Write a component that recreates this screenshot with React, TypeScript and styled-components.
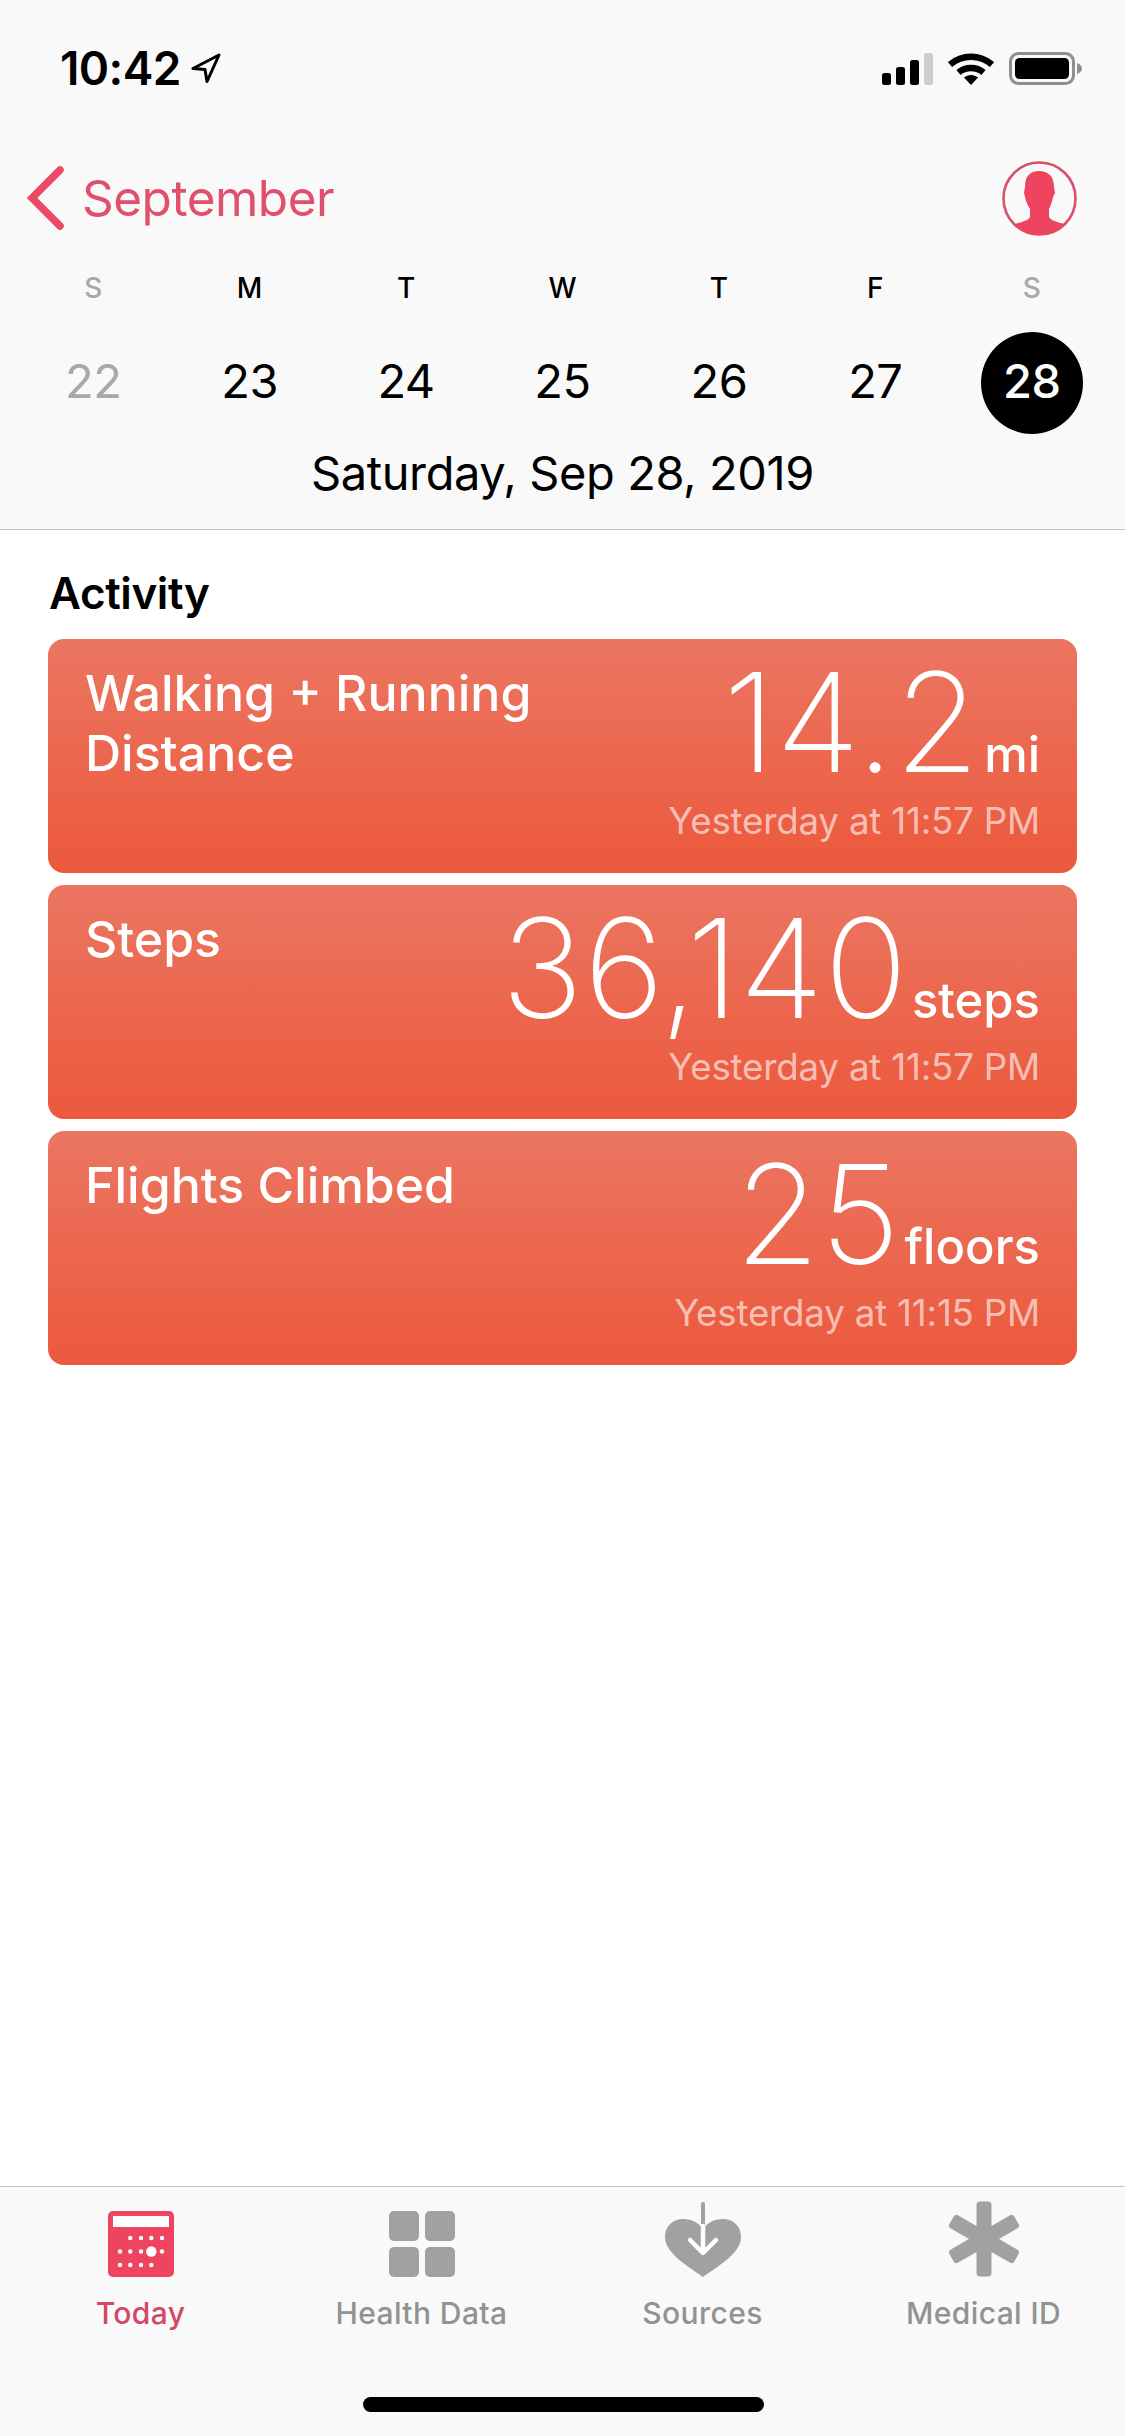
import React from "react";
import styled, { createGlobalStyle } from "styled-components";

const Global = createGlobalStyle`
  html, body { margin: 0; padding: 0; background: #fff; }
  body { font-family: Inter, "Liberation Sans", sans-serif; -webkit-font-smoothing: antialiased; }
`;

const Page = styled.div`
  width: 1125px; height: 2436px; display: flex; flex-direction: column; background: #fff; overflow: hidden;
`;
const Header = styled.header`
  background: #f9f9f9; border-bottom: 1px solid #c4c4c4; height: 530px; box-sizing: border-box;
`;
const StatusBar = styled.div`
  height: 136px; box-sizing: border-box; padding: 44px 43px 0 60px; display: flex; align-items: flex-start; justify-content: space-between;
`;
const TimeGroup = styled.div`display: flex; align-items: center; gap: 10px;`;
const Time = styled.span`font-size: 46px; line-height: 48px; font-weight: 600; letter-spacing: -0.6px; color: #000;`;
const StatusIcons = styled.div`display: flex; align-items: flex-end; gap: 15px; padding-top: 8px;`;
const NavRow = styled.div`
  height: 124px; box-sizing: border-box; padding: 0 48px 0 27px; display: flex; align-items: center; justify-content: space-between;
`;
const Back = styled.div`display: flex; align-items: center; gap: 18px;`;
const BackText = styled.span`font-size: 49.5px; color: #e0506c; letter-spacing: -0.5px;`;
const WeekRow = styled.div`
  padding: 0 15px; display: grid; grid-template-columns: repeat(7, 1fr); justify-items: center; align-items: center;
`;
const Weekday = styled.span<{ $muted?: boolean }>`
  height: 56px; line-height: 56px; font-size: 28px; font-weight: 500; color: ${p => (p.$muted ? "#a8a8a8" : "#000")};
`;
const DayNum = styled.span<{ $muted?: boolean; $active?: boolean }>`
  width: 102px; height: 102px; margin: 16px 0 12px; padding-bottom: 6px; box-sizing: border-box; border-radius: 50%; display: flex; align-items: center; justify-content: center;
  font-size: 47px; letter-spacing: -0.5px; font-weight: ${p => (p.$active ? 500 : 400)};
  background: ${p => (p.$active ? "#000" : "transparent")};
  color: ${p => (p.$active ? "#fff" : p.$muted ? "#a8a8a8" : "#000")};
`;
const FullDate = styled.div`
  height: 54px; line-height: 54px; text-align: center; font-size: 47px; letter-spacing: -0.4px; color: #000;
`;
const Main = styled.main`flex: 1; padding: 41px 48px 0;`;
const SectionTitle = styled.h2`
  margin: 0 0 24px 1px; font-size: 44px; line-height: 44px; font-weight: 600; letter-spacing: -0.4px; color: #000;
`;
const CardList = styled.div`display: flex; flex-direction: column; gap: 12px;`;
const Card = styled.section`
  height: 234px; box-sizing: border-box; border-radius: 16px; padding: 24px 37px 0; display: flex; justify-content: space-between;
  background: linear-gradient(180deg, #eb7662 0%, #ec5c40 88%, #ec5a3e 100%); color: #fff;
`;
const CardTitle = styled.div`font-size: 50px; line-height: 60px; font-weight: 500; white-space: pre-line;`;
const CardRight = styled.div`display: flex; flex-direction: column; align-items: flex-end;`;
const ValueRow = styled.div`display: flex; align-items: baseline; gap: 4px; height: 122px; margin-top: -2px;`;
const Value = styled.span`font-size: 138px; line-height: 122px; font-weight: 200; letter-spacing: 0.4px;`;
const Unit = styled.span`font-size: 49px; font-weight: 500;`;
const Stamp = styled.div`font-size: 36.7px; line-height: 44px; margin-top: 16px; color: rgba(255,255,255,.62); letter-spacing: -0.2px;`;
const TabBar = styled.nav`
  height: 250px; box-sizing: border-box; background: #f9f9f9; border-top: 1px solid #c4c4c4; position: relative;
  display: grid; grid-template-columns: repeat(4, 281px); padding: 10px 0 0 0;
`;
const Tab = styled.div`display: flex; flex-direction: column; align-items: center;`;
const TabIcon = styled.div`height: 80px; display: flex; align-items: flex-end; justify-content: center;`;
const TabLabel = styled.span<{ $active?: boolean }>`
  margin-top: 18px; font-size: 30px; line-height: 36px; font-weight: 500; letter-spacing: 0.4px; color: ${p => (p.$active ? "#d04a68" : "#929292")};
`;
const HomeBar = styled.div`
  position: absolute; left: 363px; bottom: 24px; width: 401px; height: 15px; border-radius: 8px; background: #000;
`;

const Arrow = () => (
  <svg width="30" height="30" viewBox="0 0 30 30"><path d="M28 2 L2 15.5 L14 16.5 L16 28.5 Z" fill="none" stroke="#000" strokeWidth="3" strokeLinejoin="round" /></svg>
);
const Signal = () => (
  <svg width="51" height="32" viewBox="0 0 51 32">
    <rect x="0" y="20" width="9" height="12" rx="2.5" fill="#000" />
    <rect x="14" y="14" width="9" height="18" rx="2.5" fill="#000" />
    <rect x="28" y="7" width="9" height="25" rx="2.5" fill="#000" />
    <rect x="42" y="0" width="9" height="32" rx="2.5" fill="#cdcdcd" />
  </svg>
);
const Wifi = () => (
  <svg width="46" height="33" viewBox="0 0 46 33">
    <path d="M2 12.5 C14 2 32 2 44 12.5" fill="none" stroke="#000" strokeWidth="6.5" />
    <path d="M10.5 20.5 C17.5 14.5 28.5 14.5 35.5 20.5" fill="none" stroke="#000" strokeWidth="6.5" />
    <path d="M16 25.5 C20 22 26 22 30 25.5 L23 33 Z" fill="#000" />
  </svg>
);
const Battery = () => (
  <svg width="73" height="33" viewBox="0 0 73 33">
    <rect x="1.5" y="1.5" width="63" height="30" rx="8" fill="none" stroke="#8f8f8f" strokeWidth="3" />
    <rect x="6" y="6" width="54" height="21" rx="4.5" fill="#000" />
    <path d="M68 11 C71 12 73 14 73 16.5 C73 19 71 21 68 22 Z" fill="#8f8f8f" />
  </svg>
);
const Chevron = () => (
  <svg width="37" height="64" viewBox="0 0 37 64"><path d="M33 4 L5 32 L33 60" fill="none" stroke="#ea4a64" strokeWidth="7.5" strokeLinecap="round" strokeLinejoin="miter" /></svg>
);
const Avatar = () => (
  <svg width="75" height="75" viewBox="0 0 75 75">
    <defs><clipPath id="av"><circle cx="37.5" cy="37.5" r="36" /></clipPath></defs>
    <circle cx="37.5" cy="37.5" r="36" fill="none" stroke="#d9506a" strokeWidth="2.6" />
    <path clipPath="url(#av)" fill="#ee4460" d="M37 10 C46 10 52 15 52 26 L53 32 L51 36 C50 42 48 46 47 48 L47 56 C49 60 56 61 62 63 L66 75 L8 75 L13 63 C19 61 26 60 28 56 L28 48 C26 45 24 41 23 36 L22 32 L23 26 C23 15 28 10 37 10 Z" />
  </svg>
);
const CalendarIcon = () => (
  <svg width="66" height="66" viewBox="0 0 66 66">
    <rect width="66" height="66" rx="5" fill="#ee4460" />
    <rect x="5" y="5" width="56" height="11" fill="#fff" />
    <g fill="#fff">
      {[22.3, 33, 43.3, 54].map(x => <circle key={x} cx={x} cy="27" r="2.2" />)}
      {[12, 22.3, 33, 54].map(x => <circle key={x} cx={x} cy="40.5" r="2.2" />)}
      <circle cx="43.3" cy="40.5" r="5.2" />
      {[12, 22.3, 33, 43.3].map(x => <circle key={x} cx={x} cy="54" r="2.2" />)}
    </g>
  </svg>
);
const GridIcon = () => (
  <svg width="66" height="66" viewBox="0 0 66 66" fill="#a1a1a1">
    <rect x="0" y="0" width="30" height="30" rx="5" />
    <rect x="36" y="0" width="30" height="30" rx="5" />
    <rect x="0" y="36" width="30" height="30" rx="5" />
    <rect x="36" y="36" width="30" height="30" rx="5" />
  </svg>
);
const HeartIcon = () => (
  <svg width="76" height="75" viewBox="0 0 76 75">
    <path fill="#a1a1a1" d="M38 75 C26 66 0 52 0 35 C0 24 8 17 18 17 C27 17 34 21 38 27 C42 21 49 17 58 17 C68 17 76 24 76 35 C76 52 50 66 38 75 Z" />
    <path d="M38 2 L38 24" stroke="#a1a1a1" strokeWidth="4" strokeLinecap="round" />
    <path d="M38 24 L38 50 M25 38 L38 51 L51 38" fill="none" stroke="#fff" strokeWidth="4.5" strokeLinecap="round" strokeLinejoin="round" />
  </svg>
);
const StarIcon = () => (
  <svg width="72" height="76" viewBox="0 0 72 76" fill="#a1a1a1">
    {[0, 60, 120].map(a => <rect key={a} x="28.5" y="0.5" width="15" height="75" rx="3.5" transform={`rotate(${a} 36 38)`} />)}
  </svg>
);

const days = [
  { w: "S", d: "22", muted: true },
  { w: "M", d: "23" },
  { w: "T", d: "24" },
  { w: "W", d: "25" },
  { w: "T", d: "26" },
  { w: "F", d: "27" },
  { w: "S", d: "28", muted: true, active: true },
];
const cards = [
  { t: "Walking + Running\nDistance", v: "14.2", u: "mi", s: "Yesterday at 11:57 PM" },
  { t: "Steps", v: "36,140", u: "steps", s: "Yesterday at 11:57 PM" },
  { t: "Flights Climbed", v: "25", u: "floors", s: "Yesterday at 11:15 PM" },
];
const tabs = [
  { l: "Today", i: <CalendarIcon />, active: true },
  { l: "Health Data", i: <GridIcon /> },
  { l: "Sources", i: <HeartIcon /> },
  { l: "Medical ID", i: <StarIcon /> },
];

export default function App() {
  return (
    <Page>
      <Global />
      <Header>
        <StatusBar>
          <TimeGroup><Time>10:42</Time><Arrow /></TimeGroup>
          <StatusIcons><Signal /><Wifi /><Battery /></StatusIcons>
        </StatusBar>
        <NavRow>
          <Back><Chevron /><BackText>September</BackText></Back>
          <Avatar />
        </NavRow>
        <WeekRow>
          {days.map((x, i) => <Weekday key={i} $muted={x.muted}>{x.w}</Weekday>)}
          {days.map(x => <DayNum key={x.d} $muted={x.muted} $active={x.active}>{x.d}</DayNum>)}
        </WeekRow>
        <FullDate>Saturday, Sep 28, 2019</FullDate>
      </Header>
      <Main>
        <SectionTitle>Activity</SectionTitle>
        <CardList>
          {cards.map(c => (
            <Card key={c.t}>
              <CardTitle>{c.t}</CardTitle>
              <CardRight>
                <ValueRow><Value>{c.v}</Value><Unit>{c.u}</Unit></ValueRow>
                <Stamp>{c.s}</Stamp>
              </CardRight>
            </Card>
          ))}
        </CardList>
      </Main>
      <TabBar>
        {tabs.map(t => (
          <Tab key={t.l}>
            <TabIcon>{t.i}</TabIcon>
            <TabLabel $active={t.active}>{t.l}</TabLabel>
          </Tab>
        ))}
        <HomeBar />
      </TabBar>
    </Page>
  );
}
